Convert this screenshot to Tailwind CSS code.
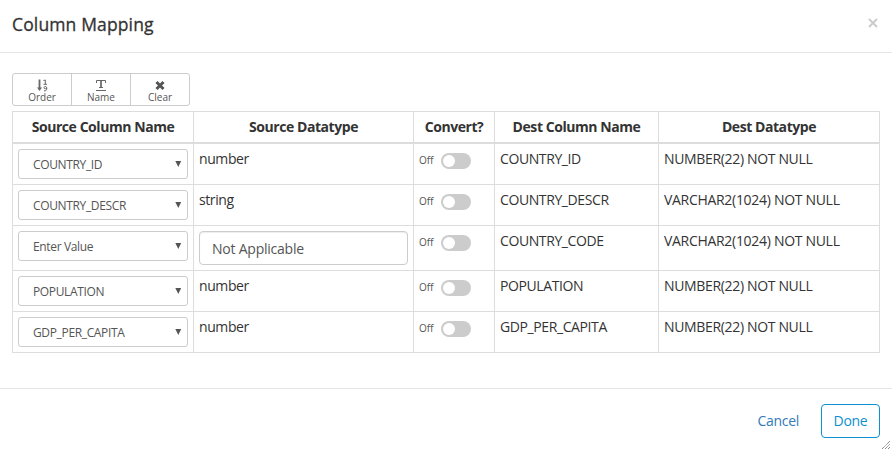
<!DOCTYPE html>
<html lang="en"><head><meta charset="utf-8"><title>Column Mapping</title>
<script src="https://cdn.jsdelivr.net/npm/@tailwindcss/browser@4"></script></head>
<body class="h-[450px] w-[892px] overflow-hidden bg-white font-['Open_Sans','Noto_Sans',sans-serif] text-[14px] leading-5 text-[#333]">
<div class="relative flex h-[450px] flex-col">
<header class="flex h-[53px] shrink-0 justify-between border-b border-[#e5e5e5] pr-[14px] pl-3">
<h4 class="pt-[12px] text-[17.5px] leading-[25px] font-medium tracking-[0.14px] [-webkit-text-stroke:0.3px_#333]"><span>Column Mapping</span></h4>
<svg class="mt-[18px]" width="10" height="10" viewBox="0 0 10 10" stroke="#ccc" stroke-width="2"><path d="M1 1 9 9M9 1 1 9"/></svg>
</header>
<main class="h-[335px] px-3 pt-5">
<div class="flex h-[33px] w-[178px] rounded-[3px] border border-[#ccc] text-[10px] leading-[11px] text-[#555]">
<button class="flex w-[59px] flex-col items-center border-r border-[#ccc] pt-[5px]"><svg width="12" height="13" viewBox="0 0 12 13" fill="none" stroke="#666"><path stroke-width="1.8" d="M3.5 0.5V10"/><path fill="#666" stroke="none" d="M1 8.5H6L3.5 12Z"/><path d="M7.5 1.5 9.3 1V5M7.5 5.3H11"/><path d="M10.8 9C10.8 10 8 10.2 8 8.7 8 7 10.8 7 10.8 9 10.8 11 10 12.2 8 11.8"/></svg><span>Order</span></button>
<button class="flex w-[59px] flex-col items-center border-r border-[#ccc] pt-[5px]"><svg width="12" height="13" viewBox="0 0 12 13" fill="none" stroke="#666"><path d="M1.5 4V1.5H10.5V4M4 8.5H8M1 11.5H11"/><path stroke-width="1.7" d="M6 1.5V8.5"/></svg><span>Name</span></button>
<button class="flex w-[58px] flex-col items-center pt-[5px]"><svg width="12" height="13" viewBox="0 0 12 13" stroke="#555" stroke-width="3"><path d="M2.5 3 9.5 10M9.5 3 2.5 10"/></svg><span>Clear</span></button>
</div>
<div id="grid" class="mt-[5px] grid w-[868px] grid-cols-[181px_220px_81px_164px_221px] grid-rows-[32px_41px_41px_45px_41px_41px] border-t border-l border-[#ddd]"></div>
</main>
<footer class="flex h-[62px] justify-end border-t border-[#e5e5e5] pt-[15px] pr-3">
<button class="mr-[22px] h-[34px] tracking-[-0.3px] text-[#337ab7]"><span>Cancel</span></button>
<button class="h-[34px] w-[59px] rounded-[4px] border border-[#0d90d1] tracking-[-0.3px] text-[#0d90d1]"><span>Done</span></button>
</footer>
<svg class="absolute right-[2px] bottom-[1px]" width="8" height="8" viewBox="0 0 8 8" stroke="#777" stroke-dasharray="1.2 .5"><path d="M0 8 8 0M3 8 8 3M6 8 8 6"/></svg>
</div>
<script>
const heads=['Source Column Name','Source Datatype','Convert?','Dest Column Name','Dest Datatype'];
const rows=[['COUNTRY_ID','number','COUNTRY_ID','NUMBER(22) NOT NULL'],['COUNTRY_DESCR','string','COUNTRY_DESCR','VARCHAR2(1024) NOT NULL'],['Enter Value','','COUNTRY_CODE','VARCHAR2(1024) NOT NULL'],['POPULATION','number','POPULATION','NUMBER(22) NOT NULL'],['GDP_PER_CAPITA','number','GDP_PER_CAPITA','NUMBER(22) NOT NULL']];
const cell='border-r border-b border-[#ddd] px-[5px] pt-[5px] whitespace-nowrap';
document.getElementById('grid').innerHTML=heads.map(h=>`<div class="border-r border-b-2 border-[#ddd] pt-[5px] text-center font-bold tracking-[-0.44px] whitespace-nowrap"><span>${h}</span></div>`).join('')+rows.map(([s,t,d,y])=>`
<div class="${cell}"><button class="flex h-[30px] w-[170px] items-center justify-between rounded-[3px] border border-[#ccc] pr-[5px] pl-[14px] text-[12px] tracking-[-0.35px] text-[#555]"><span class="pt-[2px]">${s}</span><svg class="mb-[1px]" width="7" height="6" viewBox="0 0 7 6" fill="#555"><path d="M0.3 0H6.2L3.3 6Z"/></svg></button></div>
<div class="${cell}">${t?`<span class="tracking-[-0.4px]">${t}</span>`:'<div class="h-[34px] w-[209px] rounded-[4px] border border-[#ccc] px-3 py-[7px] tracking-[-0.23px] text-[#555] shadow-[inset_0_1px_1px_rgba(0,0,0,.075)]"><span>Not Applicable</span></div>'}</div>
<div class="${cell}"><div class="flex pt-[4px]"><span class="w-[22px] text-[10px] leading-[14px] text-[#555]">Off</span><i class="block h-4 w-[30px] rounded-full bg-[#ccc] p-[2px]"><i class="block size-3 rounded-full bg-white"></i></i></div></div>
<div class="${cell}"><span class="tracking-[-0.4px]">${d}</span></div><div class="${cell}"><span class="${y[0]==='N'?'tracking-[-0.34px]':'tracking-[-0.3px]'}">${y}</span></div>`).join('');
</script>
</body></html>
